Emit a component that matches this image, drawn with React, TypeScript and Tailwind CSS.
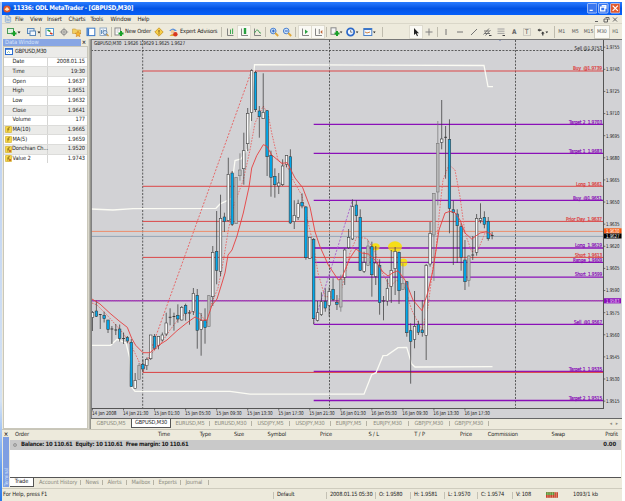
import type { ReactNode } from 'react';
import { FileText } from 'lucide-react';

type Kind = 'w' | 'b' | 'g' | 'd';
type Candle = [number, number, number, number, Kind];

// high, body top, body bottom, low, kind
const candles: Candle[] = [
  [311, 312.5, 317.5, 331, 'w'], [300.7, 311, 316.3, 317, 'b'], [314, 314.5, 315, 329, 'd'], [311.7, 315.3, 318.7, 322.5, 'b'],
  [320, 320, 329.5, 333, 'b'], [326, 329, 330, 344, 'd'], [324, 330, 330.5, 335, 'd'], [324.5, 329, 338.5, 341.5, 'b'],
  [332.5, 338.5, 339, 344, 'd'], [336, 337.5, 341, 343.3, 'b'], [339, 342.3, 386.7, 387, 'b'], [373, 380.3, 388.7, 389, 'w'],
  [363, 365.3, 379.3, 379.5, 'g'], [359.3, 364.3, 369, 372, 'b'], [357.5, 359.3, 365.7, 370, 'w'], [335, 335, 358.7, 360, 'w'],
  [334, 336.3, 348.3, 350, 'b'], [336, 336.3, 345.3, 349.3, 'w'], [332.5, 335, 340, 341.5, 'w'], [312.7, 323, 334, 336, 'w'],
  [308.3, 317.3, 320, 325.3, 'd'], [312.7, 316.5, 317.5, 330.7, 'd'], [304.3, 315.3, 319, 322.7, 'b'], [306, 307.3, 320, 320.5, 'w'],
  [303.7, 305.3, 313.7, 320.7, 'b'], [310, 313, 313.5, 324.7, 'd'], [288, 293.3, 311.3, 315, 'w'], [289, 295.3, 330.3, 348.7, 'b'],
  [313, 320.7, 329.3, 355.7, 'w'], [308.3, 320.3, 327.7, 343.7, 'b'], [295, 295.7, 326.3, 327, 'g'], [246, 252.3, 296.7, 306, 'w'],
  [211, 251.3, 270.3, 284.3, 'b'], [194.7, 218.3, 271.3, 276, 'w'], [212.7, 217, 221.5, 232, 'b'], [157.7, 174.3, 220.7, 221.3, 'w'],
  [171, 173, 224.3, 226, 'b'], [177, 177.3, 223.7, 224, 'g'], [153.3, 170, 175.7, 180.7, 'g'], [132.7, 150.7, 168.7, 184.7, 'w'],
  [108, 113.3, 143.7, 151, 'w'], [69.3, 70.7, 112.3, 121, 'w'], [71, 72.3, 109.7, 112, 'b'], [106, 111, 116.7, 137.7, 'b'],
  [73.3, 112.3, 118.7, 119, 'w'], [110, 110.7, 156.7, 176, 'b'], [150.7, 155.3, 177.3, 196.7, 'b'], [168.3, 176.3, 184.7, 197.7, 'b'],
  [173, 183, 186, 194, 'w'], [159.3, 166, 184.7, 186, 'w'], [155, 155.3, 164.3, 167.3, 'w'], [149.3, 156.7, 223, 224, 'b'],
  [200.3, 215.3, 221.7, 229, 'w'], [199.7, 203.7, 217.3, 220, 'w'], [193.3, 202.3, 206, 208.3, 'b'], [206, 207, 257.7, 259.7, 'b'],
  [237, 237.3, 258.3, 259, 'w'], [238, 239.3, 318.7, 324, 'b'], [301, 312.7, 320.3, 321.5, 'w'], [292.3, 301.7, 314.7, 316, 'w'],
  [288.3, 301.3, 308, 311.7, 'b'], [287.3, 291.3, 305.3, 316.7, 'w'], [278.3, 289.3, 299.7, 301, 'b'], [295, 302.3, 304.3, 310, 'b'],
  [274.7, 279.3, 307, 311.7, 'g'], [248.3, 250, 277.3, 285, 'w'], [229, 237.3, 247.7, 249, 'w'], [199.3, 206.7, 239, 240, 'w'],
  [200.3, 205, 215.7, 222, 'b'], [209.3, 217.3, 270.3, 271, 'b'], [251.7, 262.7, 271.3, 273, 'w'], [240, 246, 265.3, 266, 'g'],
  [241.7, 246.7, 274.7, 296.7, 'b'], [246, 263, 276.3, 285, 'w'], [259.3, 265.3, 302.7, 314.7, 'b'], [296, 301, 302.3, 320.3, 'd'],
  [278.7, 288.3, 301, 305.7, 'w'], [250, 270.3, 286.3, 303, 'w'], [247, 251.3, 268.7, 295, 'w'], [251.5, 252.3, 290.7, 304, 'b'],
  [263.3, 283.3, 289.7, 290, 'g'], [281, 281.7, 332.7, 336.7, 'b'], [323.3, 330.7, 341.3, 383.7, 'b'], [291, 326.3, 339.3, 348.3, 'w'],
  [320.7, 324.3, 332.3, 335, 'b'], [300, 330, 332.7, 336.7, 'b'], [264, 265.3, 335.3, 360, 'w'], [222, 233.3, 264, 266.7, 'w'],
  [193, 193.3, 235, 281, 'g'], [121, 143.3, 192, 205.3, 'g'], [100, 139, 142.3, 149.3, 'w'], [126, 137.3, 138, 178.7, 'd'],
  [119.3, 139.3, 208.3, 233.3, 'b'], [200.7, 209.7, 212.7, 265, 'b'], [209.3, 214, 225.7, 263, 'b'], [223.3, 226.7, 257.3, 270.7, 'b'],
  [240, 260, 281.7, 290, 'b'], [255, 256, 280.3, 286.7, 'g'], [236, 255, 256, 260, 'd'], [214, 218.3, 252.3, 255.7, 'w'],
  [203.3, 218.3, 220.3, 223.3, 'w'], [211.3, 217.3, 224.3, 228.3, 'b'], [217, 221.3, 238.7, 240.7, 'b'], [232, 235.5, 237, 239.3, 'd'],
];

const fills: Record<Kind, string> = { w: '#fafafa', b: '#00a8ec', g: '#b8b8b8', d: '#555' };

const ma10 =
  '92,299 100,304 110,313.3 120,321.7 127.3,327.3 131.7,338.3 135.7,345.3 143,352.7 150,352.7 158,345.7 167,340 177,330.7 187,322.7 195,317 202,320.3 207,320 212,305 217,299 222,283 225,273 228,255 232,250 237,236 243.3,213 249,187 251.7,168 256.7,155.7 263.3,144.7 266.7,146 271.7,155 281.7,163.3 287.3,162.7 295,178 302.7,187.7 310,207 315,231.7 320,246.7 328.3,265 338.3,280 341.7,278 350,258 356,249 361.7,253 368.3,254 375,260 383,272 388,276 393,272.7 398,270.7 405,280 413,300 422,310.7 428,291.7 433,270 435,256.7 439,230 445,213 450,211.3 455,212.7 460,220 465,233 471.7,239 480,233 487,231.7 492,235';
const ma5 =
  '92,303 97,305 107,315 123,333 132,347 143,370 152,353 160,345 170,330 180,317 190,311.7 200,313.3 206.7,323 211.7,303 218,288 223,263 228.3,230 233.3,207 243.3,180 250,150 255,123 263.3,106 268.3,115 271.7,133 278,160 288,168 293,180 301.7,195 306.7,217 313,243 318,273 325,296.7 331.7,296.7 338,303 343,283 350,253 356.7,237.3 366.7,238.3 375,251.7 381.7,271.7 390,286.7 396.7,280 405,288 411.7,310 422,330 428,307 433,267 436,250 439.3,213 443,180 449,164.7 455,170 460,196.7 465,233 471.7,251.7 478,250 485,233 491.7,233.3';
const upper =
  '91,209 113,210 133,208.7 216,208.3 220,204 225,201.7 231.7,198.3 233,176 235,160.5 241,159 248,148 254.5,64.7 380,65.2 484,65.5 488,86.5 493,86.7';
const lower =
  '92,345.3 110.7,345.3 117,339.3 126,343 129.5,357 131.5,387 135,391.3 230,391.3 250,394.2 364,394.2 371.7,374.7 376,372.7 383,355.7 387,355.3 398,347.7 406.7,347.3 411.7,364 415,367 492.5,366.7';

const RED = '#dc4040';
const PURPLE = '#8a10b8';

const levels: { y: number; label: string; x: number; color: string }[] = [
  { y: 71, label: 'Buy  @1.9739', x: 573, color: RED },
  { y: 186.3, label: 'Long  1.9661', x: 576, color: RED },
  { y: 221.4, label: 'Prior Day  1.9637', x: 566, color: RED },
  { y: 257.4, label: 'Short  1.9613', x: 575, color: RED },
  { y: 124.3, label: 'Target 2  1.9703', x: 569, color: PURPLE },
  { y: 153.4, label: 'Target 1  1.9683', x: 569, color: PURPLE },
  { y: 200.4, label: 'Buy  @1.9651', x: 573, color: PURPLE },
  { y: 248, label: 'Long  1.9619', x: 575, color: PURPLE },
  { y: 262.4, label: 'Range  1.9609', x: 573, color: PURPLE },
  { y: 277.2, label: 'Short  1.9599', x: 575, color: PURPLE },
  { y: 324.3, label: 'Sell  @1.9567', x: 574, color: PURPLE },
  { y: 371.4, label: 'Target 1  1.9535', x: 569, color: PURPLE },
  { y: 400.5, label: 'Target 2  1.9515', x: 569, color: PURPLE },
];

const prices = ['1.9755', '1.9740', '1.9725', '1.9710', '1.9695', '1.9680', '1.9665', '1.9650', '1.9635', '1.9620', '1.9605', '1.9590', '1.9575', '1.9560', '1.9545', '1.9530', '1.9515'];
const times = ['14 Jan 2008', '14 Jan 21:30', '15 Jan 01:30', '15 Jan 05:30', '15 Jan 09:30', '15 Jan 13:30', '15 Jan 17:30', '15 Jan 21:30', '16 Jan 01:30', '16 Jan 05:30', '16 Jan 09:30', '16 Jan 13:30', '16 Jan 17:30'];

function Chart() {
  return (
    <svg className="block h-[379px] w-[531px] shrink-0" viewBox="91 39 531 379" fontSize="5.3" fill="#222">
      <rect x="91" y="39" width="531" height="379" fill="#d2d2d5" />
      <g stroke="#4c4c4c" strokeWidth="0.9" strokeDasharray="2 1.4">
        <path d="M142.7 40V408M329.5 40V408M515.5 40V408" />
        <path d="M91 50.5H603" />
      </g>

      <path d="M91 231.4H603" stroke="#ee8460" strokeWidth="0.9" />
      <path d="M91 236.4H603" stroke="#8fa0b0" strokeWidth="0.9" />
      <path d="M91 300.8H603" stroke="#9a3fba" strokeWidth="1.5" />
      <path d="M91 300.8H603" stroke="#c05a98" strokeWidth="0.6" strokeDasharray="1 1" />
      {levels.map((l) => (
        <g key={l.label + l.color}>
          <path
            d={l.color === RED ? `M142.7 ${l.y}H603` : `M313.7 ${l.y}H603`}
            stroke={l.color}
            strokeWidth={l.color === RED ? 0.95 : 1.3}
          />
          <text x={l.x} y={l.y - 0.8} fill={l.color} textLength={602 - l.x} lengthAdjust="spacingAndGlyphs" xmlSpace="preserve" stroke={l.color} strokeWidth="0.2">
            {l.label}
          </text>
        </g>
      ))}
      <path d="M142.7 372.4H603" stroke={RED} strokeWidth="1" />
      <text x="574.5" y="49.8" textLength="27.5" lengthAdjust="spacingAndGlyphs">Sell  @1.9753</text>

      <g fill="#f5de18">
        <ellipse cx="395" cy="246.7" rx="7" ry="5.4" />
        <ellipse cx="375.5" cy="246.8" rx="4.2" ry="3.6" />
        <ellipse cx="403.5" cy="262.4" rx="3.8" ry="4" />
      </g>
      <path d="M313.7 248H410M313.7 262.4H410" stroke={PURPLE} strokeWidth="0.5" />

      <g fill="none">
        <polyline points={upper} stroke="#fbfbf4" strokeWidth="1.3" />
        <polyline points={lower} stroke="#fbfbf4" strokeWidth="1.3" />
        <path d="M143 372L251.5 71" stroke="#e85c5c" strokeWidth="0.9" strokeDasharray="2 1.5" />
        <path d="M313.7 324L352.5 200" stroke="#a860cc" strokeWidth="0.9" strokeDasharray="2.2 1.4" />
        <polyline points={ma5} stroke="#e66464" strokeWidth="0.9" strokeDasharray="1.6 1.3" />
      </g>

      {candles.map(([high, top, bottom, low, kind], i) => {
        const x = 92.5 + i * 3.88;
        return (
          <g key={i} stroke={kind === 'g' ? '#777' : '#3c3c3c'} strokeWidth="0.75">
            <path d={`M${x} ${high}V${low}`} />
            {kind === 'd' ? (
              <path d={`M${x - 1.4} ${top}H${x + 1.4}`} strokeWidth="1" />
            ) : (
              <rect x={x - 1.25} y={top} width="2.5" height={bottom - top} fill={fills[kind]} strokeWidth="0.6" />
            )}
          </g>
        );
      })}
      <polyline points={ma10} fill="none" stroke="#e64040" strokeWidth="0.9" />
      <path d="M498 39h4l-2 2z" fill="#6478b4" />

      <path d="M91 408.5H603.5M603.5 39V409" stroke="#555" strokeWidth="1" fill="none" />
      <path d="M91 39.5H622M91.4 39V418" stroke="#777" strokeWidth="1" fill="none" />
      <text x="94" y="45" textLength="91" lengthAdjust="spacingAndGlyphs">GBPUSD,M30&#160;&#160;1.9626 1.9629 1.9625 1.9627</text>
      {prices.map((p, i) => (
        <g key={p}>
          <path d={`M603.5 ${47.2 + i * 22.12}h1.8`} stroke="#444" strokeWidth="0.7" />
          <text x="606" y={49.1 + i * 22.12} textLength="13.5" lengthAdjust="spacingAndGlyphs">{p}</text>
        </g>
      ))}
      <rect x="604" y="228.3" width="17.5" height="5.2" fill="#f85a10" />
      <text x="606" y="232.9" fill="#fff" textLength="13.5" lengthAdjust="spacingAndGlyphs">1.9630</text>
      <rect x="604" y="233.5" width="17.5" height="5" fill="#000" />
      <text x="606" y="237.9" fill="#fff" textLength="13.5" lengthAdjust="spacingAndGlyphs">1.9627</text>
      <rect x="604" y="298.2" width="17" height="5.2" fill={PURPLE} />
      <text x="606" y="302.7" fill="#e8c8f4" textLength="13.5" lengthAdjust="spacingAndGlyphs">1.9583</text>
      {times.map((t, i) => (
        <g key={t}>
          <path d={`M${92.5 + i * 31.04} 408.5v2`} stroke="#444" strokeWidth="0.7" />
          <text x={91.9 + i * 31.04} y="415.4" textLength={i ? 25.5 : 24.5} lengthAdjust="spacingAndGlyphs">{t}</text>
        </g>
      ))}
    </svg>
  );
}

function Icon({ children }: { children: ReactNode }) {
  return (
    <svg className="block size-[10px] shrink-0 overflow-visible" viewBox="0 0 10 10" fill="none" strokeWidth="1">
      {children}
    </svg>
  );
}

const plus = <path d="M4.5 6.5h5M7 4v5" stroke="#18a028" strokeWidth="2" />;
const caret = <path d="M10.5 4.5h3l-1.5 2z" fill="#222" />;
const axes = <path d="M2.5 1.5v7h6.5" stroke="#777" strokeWidth="0.9" />;

type Tool = { w: number; sep?: boolean; on?: boolean; icon: ReactNode };

const tools: Tool[] = [
  { w: 14, icon: <><rect x="0.5" y="1.5" width="6" height="5" fill="#dff0df" stroke="#4a9a5a" />{plus}{caret}</> },
  { w: 20, icon: <><rect x="0.5" y="1.5" width="6.5" height="5" fill="#dce9f8" stroke="#5a88b8" /><rect x="3" y="4" width="5.5" height="4.5" fill="#f4f8fc" stroke="#5a88b8" />{caret}</> },
  { w: 18, sep: true, icon: <><rect x="1" y="1.5" width="7.5" height="7" fill="#fff" stroke="#5a9ad0" /><path d="M2.5 3l3 1.5" stroke="#2a9a40" strokeWidth="1.5" /><path d="M5 6l2.5 1" stroke="#d03820" strokeWidth="1.5" /></> },
  { w: 14, icon: <><circle cx="5" cy="5" r="2.6" stroke="#888" /><path d="M5 0.8v8.4M0.8 5h8.4" stroke="#999" /></> },
  { w: 13, icon: <><path d="M0.5 2h3l1 1h4v3.5h-8z" fill="#f2cf62" stroke="#c8983a" strokeWidth="0.6" /><path d="M6 4l1 2 2 .3-1.5 1.4.4 2-1.9-1-1.8 1 .4-2-1.5-1.4 2-.3z" fill="#f6b830" stroke="#c87820" strokeWidth="0.5" /></> },
  { w: 14, icon: <><rect x="1" y="1.2" width="7.8" height="7.4" fill="#fff" stroke="#3a78c8" /><path d="M2.2 1.5v7" stroke="#3a78c8" strokeWidth="1.8" /></> },
  { w: 13, icon: <><rect x="1" y="1" width="6.5" height="7.5" fill="#f4f8fc" stroke="#92aac4" /><path d="M2.5 3v4M4.2 2.5v3.5" stroke="#6090c0" /><circle cx="6" cy="5.5" r="2" fill="#d4e8fc" stroke="#6a8ab0" /><path d="M7.5 7l2 2" stroke="#c89840" strokeWidth="1.3" /></> },
];

const chartTools: Tool[] = [
  { w: 17, sep: true, icon: <><path d="M2.5 1.5v7h6" stroke="#777" strokeWidth="0.9" /><path d="M5.5 2.5v4.5M7.6 1.5v5.5" stroke="#28a040" strokeWidth="0.9" /></> },
  { w: 14, on: true, icon: <>{axes}<path d="M6 1v6" stroke="#28a040" strokeWidth="2.4" /></> },
  { w: 13, icon: <>{axes}<path d="M2.5 6Q5 1 6.5 4T9 6" stroke="#48a058" /></> },
  { w: 17, sep: true, icon: <><circle cx="4.2" cy="4" r="2.8" fill="#cfe4fa" stroke="#4a80d0" /><path d="M6.2 6l3 3" stroke="#e0a838" strokeWidth="1.8" /><path d="M2.8 4h3M4.3 2.5v3" stroke="#2860c0" /></> },
  { w: 13, icon: <><circle cx="4.2" cy="4" r="2.8" fill="#cfe4fa" stroke="#4a80d0" /><path d="M6.2 6l3 3" stroke="#e0a838" strokeWidth="1.8" /><path d="M2.8 4h3" stroke="#2860c0" /></> },
  { w: 18, sep: true, on: true, icon: <>{axes}<path d="M5 2.5v4.5l3-2.2z" fill="#28a040" /></> },
  { w: 13, on: true, icon: <>{axes}<path d="M6.3 2v5" stroke="#777" strokeWidth="0.9" /><path d="M9.3 3v4l-2-2z" fill="#c06030" /></> },
  { w: 17, sep: true, icon: <><rect x="1" y="0.8" width="5" height="6.5" fill="#f4f4f4" stroke="#888" />{plus}<path d="M9.8 4.5h2.6l-1.3 1.8z" fill="#222" /></> },
  { w: 16, icon: <><circle cx="4.6" cy="5" r="3.6" fill="#eef6ff" stroke="#2c68c8" strokeWidth="1.7" /><path d="M4.6 3v2.2h1.8" stroke="#555" strokeWidth="0.7" /><path d="M9.8 4.5h2.6l-1.3 1.8z" fill="#222" /></> },
  { w: 17, icon: <><rect x="0.8" y="1.5" width="8" height="7" fill="#f4f8fc" stroke="#4a80c8" /><path d="M0.8 2.2h8" stroke="#3a74c8" strokeWidth="1.6" /><path d="M2 5l2 1 3-1" stroke="#d08040" /><path d="M10 4.5h2.6l-1.3 1.8z" fill="#222" /></> },
];

const drawTools: Tool[] = [
  { w: 15, sep: true, on: true, icon: <path d="M3 1v7l1.7-1.5L6 9.2l1-.5-1.2-2.5H8z" fill="#222" /> },
  { w: 13, icon: <path d="M5 1.5v7M1.5 5h7" stroke="#777" strokeWidth="0.9" /> },
  { w: 17, sep: true, icon: <path d="M5 2v6" stroke="#666" strokeWidth="0.9" /> },
  { w: 13.5, icon: <path d="M2 5h6" stroke="#666" strokeWidth="0.9" /> },
  { w: 14, icon: <path d="M2 8l6-6" stroke="#666" strokeWidth="0.9" /> },
  { w: 13.5, icon: <><path d="M1.5 7.5L7 1.5M3.5 8.5L8.5 3M2 4h5M3 6.5h5" stroke="#666" strokeWidth="0.9" /><path d="M7 8.5h2.5" stroke="#444" /></> },
  { w: 13.5, icon: <><path d="M1.5 2h7M1.5 4.2h7M1.5 6.4h7" stroke="#999" strokeWidth="0.9" /><path d="M6.5 8.5h2.5" stroke="#444" /></> },
  { w: 13, icon: <text x="2.9" y="7.4" fontSize="6.4" fontWeight="700" fill="#666">A</text> },
  { w: 13.5, icon: <><rect x="1.5" y="1.5" width="7" height="7" stroke="#999" strokeWidth="0.7" strokeDasharray="1 1" /><text x="3" y="7.4" fontSize="6.2" fill="#444">T</text></> },
  { w: 14, icon: <><path d="M1.5 3l2-1.5v1h2v1.2h-2v1zM5 6.5l1.8-2 1.8 2H7.4v2H6.2v-2z" fill="#333" /><path d="M9.5 4.5h2.6l-1.3 1.8z" fill="#222" /></> },
];

function ToolRow({ items }: { items: Tool[] }) {
  return (
    <>
      {items.map((t, i) => (
        <div key={i} className="flex h-[12px] shrink-0 items-center justify-end" style={{ width: t.w }}>
          {t.sep && <span className="mr-auto ml-0.5 h-[10px] w-px bg-[#bfbcae]" />}
          <div className={t.on ? 'bg-[#faf9f4] p-px outline-1 outline-[#dedbce]' : 'p-px'}>
            <Icon>{t.icon}</Icon>
          </div>
        </div>
      ))}
    </>
  );
}

const menus = [['File', 15], ['View', 17], ['Insert', 21.5], ['Charts', 22], ['Tools', 20], ['Window', 27], ['Help', 15]] as const;

const rows = [
  ['Date', '2008.01.15'], ['Time', '19:30'], ['Open', '1.9637'], ['High', '1.9651'], ['Low', '1.9632'], ['Close', '1.9641'],
  ['Volume', '177'], ['MA(10)', '1.9665'], ['MA(5)', '1.9659'], ['Donchian Ch...', '1.9520'], ['Value 2', '1.9743'],
];

function DataWindow() {
  return (
    <div className="flex w-[85px] shrink-0 flex-col">
      <div className="flex h-[7px] items-center justify-between text-[5.8px] text-[#d4e2fa]">
        <span className="h-full w-[78px] bg-[#88a6e4] pl-0.5 leading-[7px]">Data Window</span>
        <span className="pr-0.5 font-bold text-[#333]">×</span>
      </div>
      <div className="flex-1 border border-[#c9c7ba] bg-white">
        <div className="flex h-[9.7px] items-center gap-0.5 bg-[#ebebe9] pl-px">
          <svg className="h-[7px] w-[8px]" viewBox="0 0 8 7">
            <rect x="0.5" y="0.5" width="7" height="6" fill="#fff" stroke="#2c6cd0" />
            <path d="M0 1h8" stroke="#2c6cd0" strokeWidth="1.6" />
            <path d="M2 5l1.5-1.5L5 4.8" stroke="#58a868" fill="none" strokeWidth="0.6" />
          </svg>
          <span className="tracking-[-0.27px]">GBPUSD,M30</span>
        </div>
        {rows.map(([name, value], i) => (
          <div key={name} className={`flex h-[9.7px] items-center border-t border-[#dcdcda] ${i % 2 ? 'bg-[#ebebe9]' : 'bg-white'}`}>
            <div className="flex h-full w-[44px] items-center border-r border-[#d5d5d3]">
              <span className="flex w-[8.5px] pl-px">
                {i > 6 && (
                  <svg className="size-[7px]" viewBox="0 0 7 7">
                    <rect x="0.3" y="0.3" width="6.4" height="6.4" rx="1" fill="#f5d848" stroke="#c8a028" strokeWidth="0.6" />
                    <path d="M4.7 1.4q-1.3-.2-1.4 1L2.8 5.6M2.2 3.1h2.3" stroke="#7a5a10" strokeWidth="0.7" fill="none" />
                    {i > 8 && <path d="M4 4l2 2M6 4L4 6" stroke="#c04818" strokeWidth="0.7" />}
                  </svg>
                )}
              </span>
              <span className="whitespace-nowrap">{name}</span>
            </div>
            <span className="flex-1 pr-0.5 text-right">{value}</span>
          </div>
        ))}
      </div>
    </div>
  );
}

const chartTabs = [['GBPUSD,M5', 40], ['GBPUSD,M30', 40], ['EURUSD,M5', 39], ['EURUSD,M30', 42], ['USDJPY,M5', 38], ['USDJPY,M30', 41], ['EURJPY,M5', 36], ['EURJPY,M30', 42], ['GBPJPY,M30', 40.5], ['GBPJPY,M30', 39.5]] as const;
const columns = [['Time', 141], ['Type', 41], ['Size', 33], ['Symbol', 42], ['Price', 46], ['S / L', 47], ['T / P', 46], ['Price', 47], ['Commission', 46], ['Swap', 47], ['Profit', 53]] as const;
const terminalTabs = [['Account History', 46.5], ['News', 22], ['Alerts', 24], ['Mailbox', 27], ['Experts', 27], ['Journal', 28]] as const;
const status = [['Default', 53], ['2008.01.15 05:30', 49], ['O: 1.9580', 35], ['H: 1.9581', 34], ['L: 1.9570', 33], ['C: 1.9574', 35], ['V: 108', 30]] as const;

export default function App() {
  return (
    <div className="flex h-[501px] w-[625px] overflow-hidden bg-white pt-0.5 font-['DejaVu_Sans_Condensed','DejaVu_Sans',sans-serif] text-[5.7px] leading-none tracking-[-0.1px] text-[#222] [font-stretch:condensed]">
      <div className="w-0.5 shrink-0 bg-linear-to-b from-[#b8cdf0] from-5% via-[#d4e2f4] via-80% to-[#2878e8]" />
      <div className="flex w-[620px] shrink-0 flex-col bg-[#edeadc]">
        <header className="flex h-[13px] shrink-0 items-center bg-linear-to-b from-[#2a7cff] via-[#0453e4] to-[#0560fa] pr-0.5 text-white">
          <svg className="mr-0.5 ml-px size-[8px]" viewBox="0 0 8 8">
            <circle cx="4" cy="4" r="3.6" fill="#e0562a" />
            <path d="M1.5 4.5L4 2l2.5 2.5L4 6z" fill="#ffe0b8" />
          </svg>
          <h1 className="flex-1 text-[6.4px] font-bold tracking-[-0.31px] whitespace-nowrap">11336: ODL MetaTrader - [GBPUSD,M30]</h1>
          <div className="flex gap-px">
            {['M2.5 7h3', 'M3.5 2.5h4v3M2.5 4h4v3.5h-4z', 'M2.5 2.5l5 5M7.5 2.5l-5 5'].map((d, i) => (
              <svg key={d} className="size-[10.5px]" viewBox="0 0 10 10">
                <rect x="0.4" y="0.4" width="9.2" height="9.2" rx="1.2" fill={i === 2 ? '#e2592c' : '#3a76ee'} stroke="#d8e4fc" strokeWidth="0.7" />
                <path d={d} stroke="#fff" strokeWidth="1.2" fill="none" />
              </svg>
            ))}
          </div>
        </header>

        <nav className="flex h-[9px] shrink-0 items-center border-b border-[#dad7c9] text-[6px]">
          <FileText size={8} strokeWidth={2} color="#6a9ad8" className="mr-[3px] ml-0.5" />
          {menus.map(([m, w]) => (
            <span key={m} className="whitespace-nowrap" style={{ width: w }}>{m}</span>
          ))}
          <svg className="mr-1 ml-auto h-[7px] w-[24px]" viewBox="0 0 24 7" fill="none" stroke="#555" strokeWidth="0.9">
            <path d="M1 5.5h3M11.5 1.5h3.5v2.5M10 3h3.5v3H10zM19 1.5l4 4M23 1.5l-4 4" />
          </svg>
        </nav>

        <div className="flex h-[15px] shrink-0 items-center pl-0.5">
          <ToolRow items={tools} />
          <span className="mr-0.5 ml-px h-[10px] w-px bg-[#bfbcae]" />
          <Icon><rect x="1" y="1" width="5.5" height="7" fill="#fff" stroke="#888" /><path d="M2.5 3h3M2.5 5h2" stroke="#999" strokeWidth="0.6" />{plus}</Icon>
          <span className="w-[29px] pl-px tracking-[-0.16px] whitespace-nowrap">New Order</span>
          <span className="mr-1 ml-px"><Icon><path d="M5 .8L9.2 5 5 9.2.8 5z" fill="#f6cf48" stroke="#c89020" strokeWidth="0.8" /><path d="M5 3v2.6M5 6.4v1" stroke="#7a5010" /></Icon></span>
          <Icon><path d="M1 4q4-5 8 0z" fill="#5a92dc" /><circle cx="4.6" cy="4.8" r="2" fill="#f0c898" /><path d="M1.5 9q3-4 6 0z" fill="#e0a838" /><circle cx="7.4" cy="7.2" r="2.2" fill="#d83820" /></Icon>
          <span className="w-[41px] pl-0.5 tracking-[-0.18px] whitespace-nowrap">Expert Advisors</span>
          <ToolRow items={chartTools} />
          <span className="ml-2 h-[10px] w-px bg-[#bfbcae]" />
          <div className="ml-auto flex">
            <ToolRow items={drawTools} />
            <span className="ml-[7px] h-[12px] w-px bg-[#bfbcae]" />
            {['M1', 'M5', 'M15', 'M30', 'H1'].map((p) => (
              <span key={p} className={`flex h-[12px] w-[13.4px] items-center justify-center text-[5.2px] text-[#555] ${p === 'M30' ? 'bg-[#faf9f4] outline-1 outline-[#d0cdc0]' : ''}`}>{p}</span>
            ))}
          </div>
        </div>

        <main className="flex h-[390px] shrink-0 pl-px">
          <DataWindow />
          <div className="w-[3px] shrink-0 bg-linear-to-r from-[#edeadc] to-[#85857f]" />
          <div className="flex flex-1 flex-col">
            <Chart />
            <div className="flex h-[11px] items-start border-t border-[#666] text-[#8c8a80]">
              {chartTabs.map(([t, w], i) => (
                <span
                  key={i}
                  className={`flex h-[9px] items-center text-[5.6px] tracking-[-0.15px] whitespace-nowrap ${i === 1 ? 'border-x border-b border-[#555] bg-white text-[#222]' : ''}`}
                  style={{ width: w }}
                >
                  <span className="flex-1 text-center">{t}</span>
                  {i > 1 && <i className="h-[5px] w-px bg-[#b5b2a4]" />}
                </span>
              ))}
              <span className="ml-auto pt-0.5 pr-1 text-[5px]">◂&nbsp;&nbsp;&nbsp;▸</span>
            </div>
          </div>
        </main>

        <section className="flex h-[58px] shrink-0 border-t border-[#c8c5b8]">
          <div className="flex w-[8px] flex-col items-center pt-px">
            <b className="text-[6px]">×</b>
            <div className="flex w-[6px] flex-1 items-end justify-center bg-[#7f9fe2]">
              <span className="rotate-180 pt-px text-[5px] text-[#d4e2fa] [writing-mode:vertical-rl]">Terminal</span>
            </div>
          </div>
          <div className="flex w-[611px] flex-col">
            <div className="flex h-[10px] shrink-0 items-center pl-[5px]">
              <span className="w-[14px]">Order</span>
              {columns.map(([c, w], i) => (
                <span key={i} className="text-right whitespace-nowrap" style={{ width: w }}>{c}</span>
              ))}
            </div>
            <div className="flex h-[10px] shrink-0 items-center bg-[#c9c9c9] pr-[5px] pl-[3px] text-[5.9px] font-bold">
              <i className="mr-1 size-[4px] rounded-full border border-[#999] bg-[#b8b8b8]" />
              <span className="flex-1 tracking-[-0.32px] whitespace-pre">Balance: 10 110.61  Equity: 10 110.61  Free margin: 10 110.61</span>
              <span>0.00</span>
            </div>
            <div className="flex-1 border-b border-[#555] bg-white" />
            <div className="flex h-[9px] shrink-0 items-center text-[#8c8a80]">
              <span className="-mt-px flex h-[9px] w-[24px] items-center justify-center border-r border-b border-[#555] bg-white text-[#222]">Trade</span>
              {terminalTabs.map(([t, w]) => (
                <span key={t} className="flex h-[5px] items-center border-r border-[#b5b2a4] pl-[5px] tracking-[-0.15px] whitespace-nowrap" style={{ width: w }}>{t}</span>
              ))}
            </div>
          </div>
        </section>

        <footer className="mt-px flex flex-1 items-center border-t border-[#cfccbe] pl-px">
          <span className="w-[270px]">For Help, press F1</span>
          {status.map(([s, w]) => (
            <span key={s} className="flex h-[7px] items-center border-l border-[#c4c1b4] pl-[3px] tracking-[-0.2px] whitespace-nowrap" style={{ width: w }}>{s}</span>
          ))}
          <svg className="ml-[4px] h-[6px] w-[12px]" viewBox="0 0 13 6">
            <rect width="13" height="6" fill="#c8402c" />
            <path d="M0 0h9v3H0z" fill="#5a9a3c" />
            <path d="M2 0v6M4.5 0v6M7 0v6M9.5 0v6M11.5 0v6" stroke="#f0dcb8" strokeWidth="0.5" />
          </svg>
          <span className="ml-[15px]">1093/1 kb</span>
        </footer>
      </div>
    </div>
  );
}
